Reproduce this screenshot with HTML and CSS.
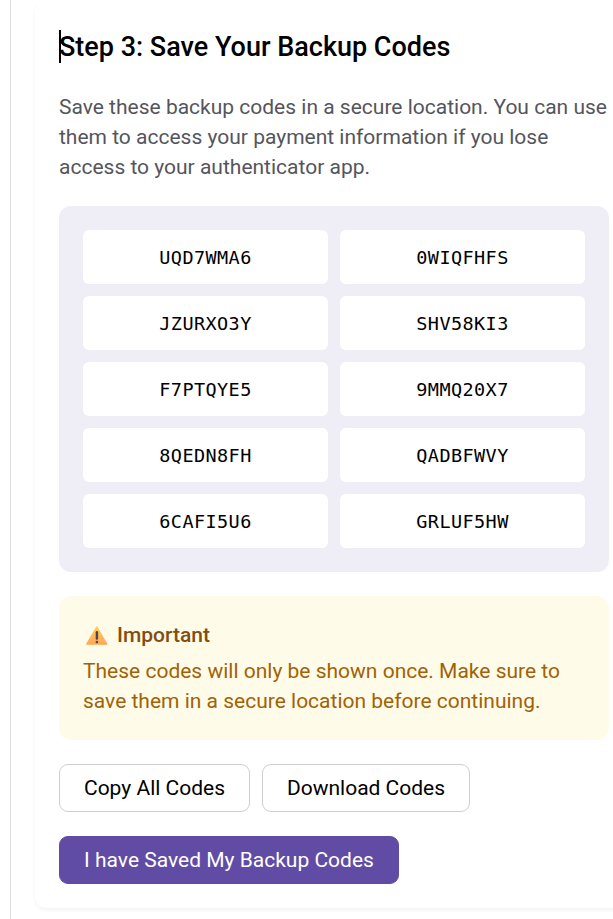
FILE: index.html
```
<!DOCTYPE html>
<html lang="en">
<head>
<meta charset="utf-8">
<title>Save Your Backup Codes</title>
<link rel="stylesheet" href="styles.css">
</head>
<body>
<main class="page">
  <section class="card">
    <h2 class="title"><span class="caret"></span><span class="title-text">Step 3: Save Your Backup Codes</span></h2>
    <p class="intro">Save these backup codes in a secure location. You can use<br>them to access your payment information if you lose<br>access to your authenticator app.</p>
    <div class="codes">
      <code>UQD7WMA6</code><code>0WIQFHFS</code>
      <code>JZURXO3Y</code><code>SHV58KI3</code>
      <code>F7PTQYE5</code><code>9MMQ20X7</code>
      <code>8QEDN8FH</code><code>QADBFWVY</code>
      <code>6CAFI5U6</code><code>GRLUF5HW</code>
    </div>
    <div class="notice">
      <h3 class="notice-title">
        <svg class="warning" width="22" height="19" viewBox="0 0 22 19" aria-hidden="true">
          <defs><linearGradient id="amber" x1="0" y1="0" x2="0" y2="1"><stop offset="0" stop-color="#ffd05c"/><stop offset="1" stop-color="#ffa658"/></linearGradient></defs>
          <path d="M10.1.8Q10.8-.2 11.5.8L21.2 17.6Q21.8 18.8 20.6 18.8H1Q-.2 18.8.4 17.6Z" fill="url(#amber)"/>
          <rect x="9.7" y="5" width="2.4" height="8.8" rx="1.2" fill="#4b4652"/>
          <circle cx="10.9" cy="16" r="1.3" fill="#4b4652"/>
        </svg>
        <span class="notice-label">Important</span>
      </h3>
      <p class="notice-text">These codes will only be shown once. Make sure to<br>save them in a secure location before continuing.</p>
    </div>
    <div class="actions">
      <button class="btn copy">Copy All Codes</button>
      <button class="btn download">Download Codes</button>
    </div>
    <button class="btn primary">I have Saved My Backup Codes</button>
  </section>
</main>
</body>
</html>
```
FILE: styles.css
```
* { box-sizing: border-box; }
html, body { margin: 0; height: 919px; overflow: hidden; background: #fff; }
body { font: 400 21px/30px Roboto, sans-serif; color: #000; }
.page { height: 919px; margin-left: 10px; padding-left: 24px; border-left: 1px solid #dedee0; }
.card { width: 598px; height: 908px; padding: 24px; border-radius: 12px; box-shadow: 0 2px 4px rgba(0,0,0,.05); }
.title { position: relative; height: 68px; margin: 0; padding-top: 5px; font-size: 27px; line-height: 36px; font-weight: 500; white-space: nowrap; }
.caret { position: absolute; left: 0; top: 6px; width: 2px; height: 33px; background: #000; }
.intro { margin: 0 0 24px; color: #55555c; white-space: nowrap; }
.codes { display: grid; grid-template-columns: 1fr 1fr; gap: 12px; height: 366px; padding: 24px; border-radius: 12px; background: #efeef7; }
.codes code { height: 54px; border-radius: 6px; background: #fff; font: 18.5px/56px "DejaVu Sans Mono", monospace; letter-spacing: 0.41px; text-align: center; }
.notice { height: 144px; margin: 24px 0; padding: 24px; border-radius: 12px; background: #fefce8; color: #a16207; white-space: nowrap; }
.notice-title { display: flex; align-items: center; gap: 9px; height: 30px; margin: 0 0 6px; padding-left: 3px; font-size: 21px; font-weight: 500; color: #854d0e; }
.warning { margin-top: 1px; }
.notice-text { margin: 0; }
.actions { display: flex; gap: 12px; margin-bottom: 24px; }
.btn { display: flex; align-items: center; justify-content: center; height: 48px; padding: 0; border: 1px solid #cfcfd1; border-radius: 9px; background: #fff; color: #000; font: inherit; white-space: nowrap; }
.copy { width: 191px; }
.download { width: 208px; }
.primary { width: 340px; border-color: #614ca5; background: #614ca5; color: #fff; }
```
